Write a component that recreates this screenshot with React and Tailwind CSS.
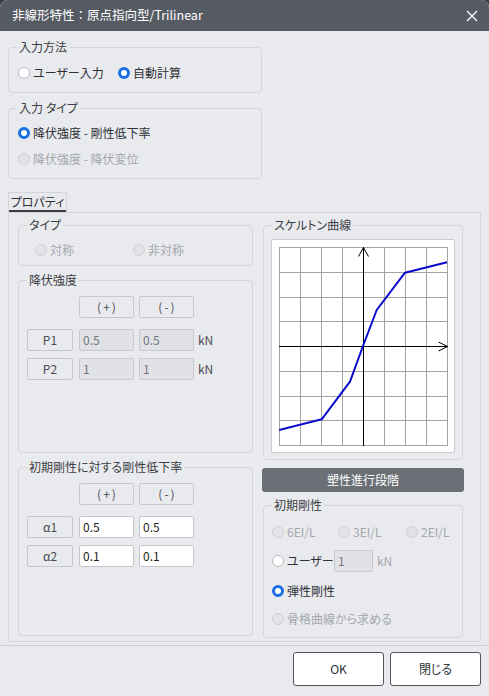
import clsx from 'clsx';

// shared text colours
const TXT = 'text-[#2d3035]';
const DIS = 'text-[#a4a7ac]';

function Group({ title, className, children }) {
  return (
    <div className={clsx('relative border border-[#d3d5da] rounded-[4px]', className)}>
      <span className="absolute -top-[9px] left-[8px] px-[2px] bg-[#e9eaee] text-[12px] leading-[16px] text-[#3b3e44]">
        {title}
      </span>
      {children}
    </div>
  );
}

function Radio({ label, checked, disabled, className }) {
  return (
    <div className={clsx('flex items-center gap-[3px] text-[12px] leading-[18px]', disabled ? DIS : TXT, className)}>
      {checked ? (
        <span className="w-[12px] h-[12px] rounded-full bg-white border-[3.5px] border-[#1a6de3]" />
      ) : (
        <span
          className={clsx(
            'w-[12px] h-[12px] rounded-full border',
            disabled ? 'bg-[#e2e3e7] border-[#cdd0d4]' : 'bg-white border-[#b9bcc2]'
          )}
        />
      )}
      <span>{label}</span>
    </div>
  );
}

function Btn({ children, className }) {
  return (
    <div
      className={clsx(
        'h-[22px] flex items-center justify-center border border-[#c6c9ce] rounded-[2px] bg-[#e9eaee] text-[12px] text-[#4a4d52]',
        className
      )}
    >
      {children}
    </div>
  );
}

function Field({ value, disabled, className }) {
  return (
    <div
      className={clsx(
        'h-[22px] flex items-center px-[3px] border rounded-[2px] text-[12px]',
        disabled ? 'bg-[#e1e2e6] border-[#c6c9ce] text-[#72767b]' : 'bg-white border-[#c3c6cb] text-[#1d1f22]',
        className
      )}
    >
      {value}
    </div>
  );
}

function ValueTable({ rows, disabled, unit }) {
  return (
    <div className="flex flex-col pl-[8px] pt-[15px]">
      <div className="flex gap-[5px] ml-[52px]">
        <Btn className="w-[55px] tracking-[2px] pl-[2px]">(+)</Btn>
        <Btn className="w-[55px] tracking-[2px] pl-[2px]">(-)</Btn>
      </div>
      <div className="flex flex-col gap-[7px] mt-[11px]">
        {rows.map((r) => (
          <div key={r.name} className="flex items-center">
            <Btn className="w-[46px]">{r.name}</Btn>
            <Field value={r.plus} disabled={disabled} className="w-[55px] ml-[6px]" />
            <Field value={r.minus} disabled={disabled} className="w-[55px] ml-[5px]" />
            {unit && <span className="ml-[4px] text-[12px] text-[#4a4d52]">{unit}</span>}
          </div>
        ))}
      </div>
    </div>
  );
}

function SkeletonChart() {
  const cols = [0, 1, 2, 3, 4, 5, 6, 7, 8];
  const curve = '0,183 42.7,172.3 71,134.7 84,99 97.7,63 126,25.7 168,15.3';
  return (
    <svg width="169" height="199" viewBox="0 0 169 199" className="block">
      {cols.map((i) => (
        <line key={'v' + i} x1={0.5 + i * 21} y1="0" x2={0.5 + i * 21} y2="199" stroke="#a3a3a3" strokeWidth="1" />
      ))}
      {cols.map((i) => (
        <line key={'h' + i} x1="0" y1={Math.round(i * 24.75) + 0.5} x2="169" y2={Math.round(i * 24.75) + 0.5} stroke="#a3a3a3" strokeWidth="1" />
      ))}
      <line x1="84.5" y1="0" x2="84.5" y2="199" stroke="#000" strokeWidth="1" />
      <line x1="0" y1="99.5" x2="169" y2="99.5" stroke="#000" strokeWidth="1" />
      <polyline points="79.5,9.5 84.5,0.5 89.5,9.5" fill="none" stroke="#000" strokeWidth="1" />
      <polyline points="159.5,95 168.5,99.5 159.5,104" fill="none" stroke="#000" strokeWidth="1" />
      <polyline points={curve} fill="none" stroke="#0a0acc" strokeWidth="2" strokeLinejoin="round" />
    </svg>
  );
}

export default function App() {
  return (
    <div className="w-[489px] h-[696px] bg-[#3a3d42] [font-family:'Noto_Sans_CJK_JP','Noto_Sans',sans-serif] [font-feature-settings:'palt']">
      <div className="w-full h-full flex flex-col bg-[#e9eaee] rounded-t-[8px] overflow-hidden">
        {/* title bar */}
        <div className="h-[31px] shrink-0 bg-[#565b63] flex items-center justify-between pl-[12px] pr-[11px]">
          <span className="text-white text-[12.5px] [font-feature-settings:normal]">非線形特性：原点指向型/Trilinear</span>
          <svg width="12" height="12" viewBox="0 0 12 12">
            <path d="M1 1 L11 11 M11 1 L1 11" stroke="#fff" strokeWidth="1.3" />
          </svg>
        </div>

        <div className="px-[8px]">
          <Group title="入力方法" className="mt-[16px] w-[254px] h-[46px]">
            <div className="flex pl-[9px] pt-[16px]">
              <Radio label="ユーザー入力" className="w-[100px]" />
              <Radio label="自動計算" checked />
            </div>
          </Group>

          <Group title="入力 タイプ" className="mt-[15px] w-[254px] h-[71px]">
            <div className="flex flex-col gap-[8px] pl-[9px] pt-[15px]">
              <Radio label="降伏強度 - 剛性低下率" checked />
              <Radio label="降伏強度 - 降伏変位" disabled />
            </div>
          </Group>

          {/* tab */}
          <div className="mt-[13px] w-[59px] h-[20px] border border-b-0 border-[#d3d5da] flex flex-col">
            <span className="flex-1 flex items-center justify-center text-[12px] leading-[16px] text-[#2d3035]">プロパティ</span>
            <div className="h-[2px] bg-[#3a3d42]" />
          </div>

          {/* tab panel */}
          <div className="h-[430px] border border-[#d3d5da] rounded-b-[3px] flex gap-[10px] pl-[9px] pt-[12px]">
            <div className="w-[235px] flex flex-col gap-[14px]">
              <Group title="タイプ" className="h-[41px]">
                <div className="flex pl-[16px] pt-[15px]">
                  <Radio label="対称" disabled className="w-[98px]" />
                  <Radio label="非対称" disabled />
                </div>
              </Group>

              <Group title="降伏強度" className="h-[173px]">
                <ValueTable
                  disabled
                  unit="kN"
                  rows={[
                    { name: 'P1', plus: '0.5', minus: '0.5' },
                    { name: 'P2', plus: '1', minus: '1' },
                  ]}
                />
              </Group>

              <Group title="初期剛性に対する剛性低下率" className="h-[169px]">
                <ValueTable
                  rows={[
                    { name: 'α1', plus: '0.5', minus: '0.5' },
                    { name: 'α2', plus: '0.1', minus: '0.1' },
                  ]}
                />
              </Group>
            </div>

            <div className="w-[200px] flex flex-col">
              <Group title="スケルトン曲線" className="h-[235px]">
                <div className="ml-[7px] mt-[13px] w-[184px] h-[214px] border border-[#c9ccd1] rounded-[2px] bg-white p-[7px]">
                  <SkeletonChart />
                </div>
              </Group>

              <div className="mt-[8px] -mx-[1px] h-[24px] rounded-[3px] bg-[#6b7077] flex items-center justify-center text-white text-[12px]">
                塑性進行段階
              </div>

              <Group title="初期剛性" className="mt-[13px] h-[133px]">
                <div className="flex flex-col gap-[7px] pl-[8px] pt-[15px]">
                  <div className="h-[22px] flex items-center">
                    <Radio label="6EI/L" disabled className="w-[66px]" />
                    <Radio label="3EI/L" disabled className="w-[68px]" />
                    <Radio label="2EI/L" disabled />
                  </div>
                  <div className="h-[22px] flex items-center">
                    <Radio label="ユーザー" className="w-[62px]" />
                    <Field value="1" disabled className="w-[39px]" />
                    <span className="ml-[4px] text-[12px] text-[#a4a7ac]">kN</span>
                  </div>
                  <div className="h-[22px] flex items-center mt-[1px]">
                    <Radio label="弾性剛性" checked />
                  </div>
                  <div className="h-[22px] flex items-center -mt-[1px]">
                    <Radio label="骨格曲線から求める" disabled />
                  </div>
                </div>
              </Group>
            </div>
          </div>
        </div>

        {/* footer */}
        <div className="mt-[3px] border-t border-[#cfd1d6] flex justify-end gap-[6px] pr-[8px] pt-[6px]">
          <div className="w-[91px] h-[34px] bg-white border border-[#50545b] rounded-[3px] flex items-center justify-center text-[12px] text-[#2d3035]">
            OK
          </div>
          <div className="w-[91px] h-[34px] bg-white border border-[#50545b] rounded-[3px] flex items-center justify-center text-[12px] text-[#2d3035]">
            閉じる
          </div>
        </div>
      </div>
    </div>
  );
}
